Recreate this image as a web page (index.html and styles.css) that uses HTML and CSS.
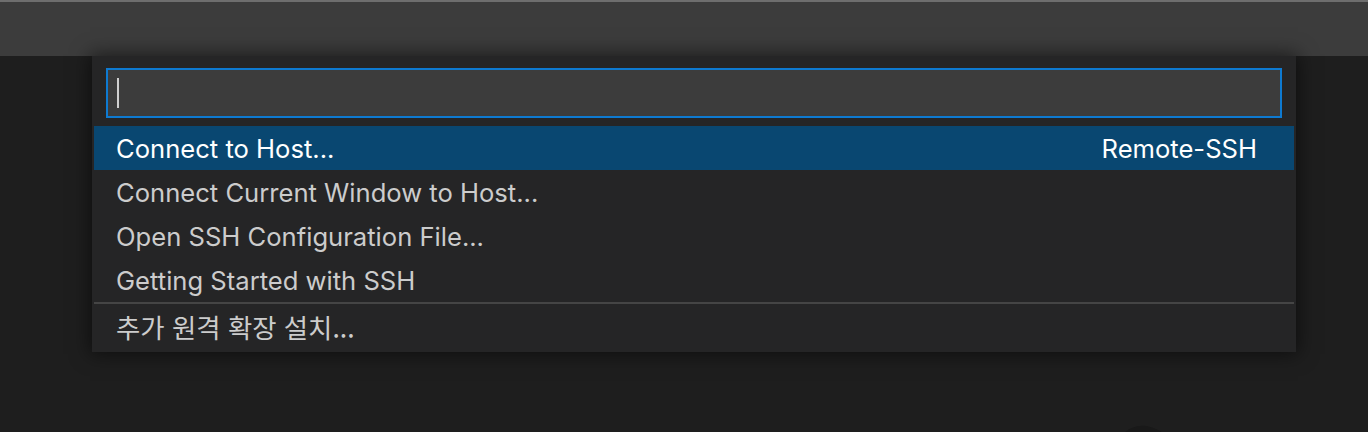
FILE: index.html
```html
<!DOCTYPE html>
<html lang="ko">
<head>
<meta charset="utf-8">
<title>Quick Pick</title>
<link rel="stylesheet" href="styles.css">
</head>
<body>
<div class="titlebar"></div>
<div class="quickpick">
  <div class="input-wrap">
    <div class="input"><span class="caret"></span></div>
  </div>
  <div class="list">
    <div class="row selected"><span class="label">Connect to Host...</span><span class="detail">Remote-SSH</span></div>
    <div class="row"><span class="label">Connect Current Window to Host...</span></div>
    <div class="row"><span class="label">Open SSH Configuration File...</span></div>
    <div class="row"><span class="label">Getting Started with SSH</span></div>
    <div class="separator"></div>
    <div class="row"><span class="label ko">추가 원격 확장 설치...</span></div>
  </div>
</div>
<div class="watermark">
  <svg width="60" height="12" viewBox="0 0 60 12"><path d="M4 12 C 14 2, 28 0, 46 12 Z" fill="#191919"/></svg>
</div>
</body>
</html>
```
FILE: styles.css
```css
html, body {
  margin: 0;
  padding: 0;
  background: #1e1e1e;
  overflow: hidden;
  height: 432px;
}
body {
  font-family: Inter, "Noto Sans CJK KR", sans-serif;
}
.titlebar {
  height: 54px;
  background: #3c3c3c;
  border-top: 2px solid #6e6e6e;
}
.quickpick {
  margin-left: 92px;
  width: 1204px;
  background: #252526;
  box-shadow: 0 0 18px 2px rgba(0, 0, 0, 0.55);
  padding: 12px 0 4px 0;
  position: relative;
}
.input-wrap {
  padding: 0 14px;
}
.input {
  height: 46px;
  background: #3c3c3c;
  border: 2px solid #0e7ad1;
  display: flex;
  align-items: center;
  padding-left: 9px;
}
.caret {
  width: 2px;
  height: 30px;
  background: #cfcfcf;
}
.list {
  margin: 8px 2px 0 2px;
}
.row {
  height: 44px;
  display: flex;
  align-items: center;
  justify-content: space-between;
  padding: 0 37px 0 22px;
  color: #cccccc;
  font-size: 25.6px;
}
.row.selected {
  background: #094771;
  color: #ffffff;
}
.ko {
  font-family: "Noto Sans CJK KR", sans-serif;
  font-size: 26.4px;
}
.separator {
  height: 2px;
  background: #454545;
}
.watermark {
  margin-top: 70px;
  padding-left: 1119px;
  height: 12px;
  line-height: 0;
}
```
